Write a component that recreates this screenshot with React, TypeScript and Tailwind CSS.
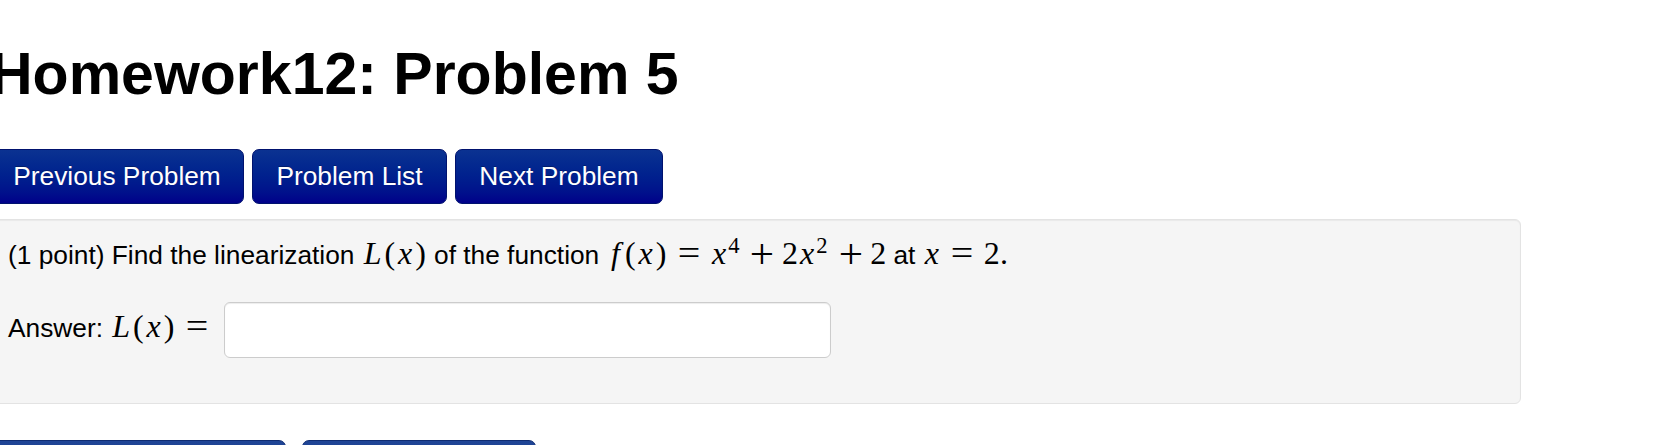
import React from "react"

function V({ c, w }: { c: string; w: string }) {
  return <span className={`inline-block text-center italic ${w}`}>{c}</span>
}

function N({ c, w }: { c: string; w: string }) {
  return <span className={`inline-block text-center ${w}`}>{c}</span>
}

// relation (=): thick space on both sides, none at the end of a formula
function Rel({ c, last }: { c: string; last?: boolean }) {
  return (
    <span className={`inline-block w-[0.778em] text-center ml-[0.278em] ${last ? "" : "mr-[0.278em]"}`}>
      <span className="inline-block scale-x-[1.25] scale-y-[1.1]">{c}</span>
    </span>
  )
}

// binary operator (+): medium space on both sides
function Bin({ c }: { c: string }) {
  return (
    <span className="inline-block w-[0.778em] mx-[0.222em] text-center">
      <span className="inline-block scale-[1.35]">{c}</span>
    </span>
  )
}

function Sup({ c }: { c: string }) {
  return (
    <span className="relative -top-[0.5em] inline-block w-[0.65em] text-left text-[0.707em] leading-none">{c}</span>
  )
}

function M({ children }: { children: React.ReactNode }) {
  return (
    <span className="font-['Liberation_Serif',serif] text-[32px] leading-none whitespace-nowrap">{children}</span>
  )
}

function NavButton({ label, w }: { label: string; w: string }) {
  return (
    <button
      className={`h-[55px] ${w} pb-[1px] rounded-[7px] border border-[#00126e] bg-linear-to-b from-[#0b3291] to-[#00008a] text-center text-[26.3px] leading-[29px] text-white [text-shadow:0_-1px_0_rgba(0,0,0,0.25)]`}
    >
      {label}
    </button>
  )
}

export default function App() {
  return (
    <div className="h-[445px] overflow-hidden bg-white font-['Liberation_Sans',Arial,sans-serif] text-black">
      <div className="-ml-[10px] w-[1531px]">
        <h1 className="pt-[42px] text-[59px] leading-[64px] font-bold">Homework12: Problem 5</h1>

        {/* navigation */}
        <div className="mt-[43px] flex gap-2">
          <NavButton label="Previous Problem" w="w-[254px]" />
          <NavButton label="Problem List" w="w-[195px]" />
          <NavButton label="Next Problem" w="w-[208px]" />
        </div>

        {/* problem */}
        <div className="mt-[15px] rounded-[6px] border border-[#e3e3e3] bg-[#f5f5f5] pl-[17px] pt-[17px] pb-[45px] shadow-[inset_0_1px_1px_rgba(0,0,0,0.05)]">
          <p className="text-[26.3px] leading-[37px] whitespace-nowrap">
            (1 point) Find the linearization{" "}
            <M>
              <V c="L" w="w-[0.681em]" />
              <N c="(" w="w-[0.389em]" />
              <V c="x" w="w-[0.572em]" />
              <N c=")" w="w-[0.389em]" />
            </M>{" "}
            of the function{" "}
            <M>
              <V c="f" w="w-[0.55em]" />
              <N c="(" w="w-[0.389em]" />
              <V c="x" w="w-[0.572em]" />
              <N c=")" w="w-[0.389em]" />
              <Rel c="=" />
              <V c="x" w="w-[0.572em]" />
              <Sup c="4" />
              <Bin c="+" />
              <N c="2" w="w-[0.5em]" />
              <V c="x" w="w-[0.572em]" />
              <Sup c="2" />
              <Bin c="+" />
              <N c="2" w="w-[0.5em]" />
            </M>{" "}
            at{" "}
            <M>
              <V c="x" w="w-[0.572em]" />
              <Rel c="=" />
              <N c="2" w="w-[0.5em]" />
              <N c="." w="w-[0.278em]" />
            </M>
          </p>

          <div className="mt-[28px] flex items-start">
            <span className="mt-[8px] text-[26.3px] leading-[37px] whitespace-nowrap">
              Answer:{" "}
              <M>
                <V c="L" w="w-[0.681em]" />
                <N c="(" w="w-[0.389em]" />
                <V c="x" w="w-[0.572em]" />
                <N c=")" w="w-[0.389em]" />
                <Rel c="=" last />
              </M>
            </span>
            <input
              type="text"
              className="ml-[15px] h-[56px] w-[607px] rounded-[6px] border border-[#cccccc] bg-white px-3 text-[26px] shadow-[inset_0_1px_1px_rgba(0,0,0,0.075)] outline-none"
            />
          </div>
        </div>

        {/* submit */}
        <div className="mt-[36px] flex gap-4">
          <button className="h-[55px] w-[296px] rounded-[7px] border border-[#0f2c72] bg-linear-to-b from-[#1f4596] to-[#163885] text-[26px] text-white">
            Preview My Answers
          </button>
          <button className="h-[55px] w-[234px] rounded-[7px] border border-[#0f2c72] bg-linear-to-b from-[#1f4596] to-[#163885] text-[26px] text-white">
            Submit Answers
          </button>
        </div>
      </div>
    </div>
  )
}
